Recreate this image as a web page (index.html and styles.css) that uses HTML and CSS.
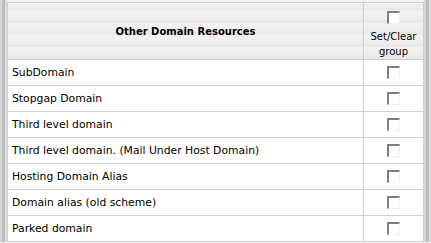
FILE: index.html
```html
<!DOCTYPE html>
<html lang="en">
  <head>
    <meta charset="UTF-8" />
    <title>Other Domain Resources</title>
    <link rel="stylesheet" href="styles.css">
  </head>
  <body>
    <div class="frame">
      <div class="rail"></div>
      <table class="resources">
        <thead>
          <tr>
            <th class="name-head">Other Domain Resources</th>
            <th class="group-head">
              <span class="check"></span>
              <span class="group-label">Set/Clear<br />group</span>
            </th>
          </tr>
        </thead>
        <tbody>
          <tr><td>SubDomain</td><td class="pick"><span class="check"></span></td></tr>
          <tr><td>Stopgap Domain</td><td class="pick"><span class="check"></span></td></tr>
          <tr><td>Third level domain</td><td class="pick"><span class="check"></span></td></tr>
          <tr><td>Third level domain. (Mail Under Host Domain)</td><td class="pick"><span class="check"></span></td></tr>
          <tr><td>Hosting Domain Alias</td><td class="pick"><span class="check"></span></td></tr>
          <tr><td>Domain alias (old scheme)</td><td class="pick"><span class="check"></span></td></tr>
          <tr><td>Parked domain</td><td class="pick"><span class="check"></span></td></tr>
        </tbody>
      </table>
      <div class="rail"></div>
    </div>
  </body>
</html>
```
FILE: styles.css
```css
body {
  margin: 0;
  background-color: #f4f4f4;
  font-family: "DejaVu Sans", Verdana, sans-serif;
  font-size: 10px;
  color: #000;
}
.frame {
  display: flex;
  width: 431px;
  padding-top: 2px;
}
.rail {
  width: 7px;
  flex: none;
  margin-top: -2px;
  background: linear-gradient(to right, #d6d6d6 0 2px, #bdbdbd 2px 5px, #dcdcdc 5px 7px);
}
.resources {
  width: 417px;
  border-collapse: collapse;
  background-color: #fff;
}
.resources th,
.resources td {
  border: 1px solid #cfcfcf;
  padding: 0;
}
.resources th {
  background: repeating-linear-gradient(to bottom, #eeeeee 0 5px, #e6e6e6 5px 7px, #f1f1f1 7px 12px);
}
.name-head {
  height: 56px;
  width: 355px;
  font-weight: bold;
}
.group-head {
  font-weight: normal;
  text-align: center;
  line-height: 15px;
  vertical-align: top;
}
.resources .group-head {
  padding-top: 8px;
}
.group-head .check {
  display: block;
  margin: 0 auto 5px;
}
.resources td {
  height: 25px;
  padding-left: 4px;
  font-size: 10.8px;
}
.resources td.pick {
  padding-left: 0;
  text-align: center;
}
.check {
  display: inline-block;
  vertical-align: middle;
  background-color: #fff;
  border-top: 2px solid #7e7e7e;
  border-left: 2px solid #7e7e7e;
  border-right: 1px solid #f0f0f0;
  border-bottom: 1px solid #f0f0f0;
  box-sizing: content-box;
  width: 10px;
  height: 10px;
}
```
